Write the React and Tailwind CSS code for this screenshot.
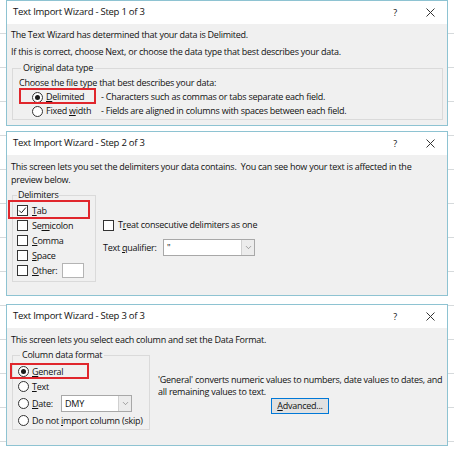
import { ChevronDown } from 'lucide-react'

const FONT = "font-['Open_Sans',sans-serif] text-[9px] tracking-[-0.25px] text-[#111]"

function Radio({ checked }) {
  return (
    <span className="flex h-[11px] w-[11px] shrink-0 items-center justify-center rounded-full border border-[#333] bg-white">
      {checked && <span className="h-[5px] w-[5px] rounded-full bg-[#1a1a1a]" />}
    </span>
  )
}

function Check({ checked }) {
  return (
    <span className="flex h-[11px] w-[11px] shrink-0 items-center justify-center border border-[#333] bg-white">
      {checked && (
        <svg width="9" height="9" viewBox="0 0 9 9">
          <path d="M1.2 4.6 L3.4 6.8 L7.8 1.6" fill="none" stroke="#222" strokeWidth="1" />
        </svg>
      )}
    </span>
  )
}

// red annotation box drawn over the screenshot
function Mark({ className }) {
  return <span className={`pointer-events-none absolute border-2 border-[#e0262c] ${className}`} />
}

function Combo({ value, className }) {
  return (
    <div className={`flex h-[17px] border border-[#a8a8a8] bg-white ${className}`}>
      <span className="flex-1 pl-[3px] leading-[15px]">{value}</span>
      <span className="flex w-[13px] items-center justify-center border-l border-[#d0d0d0] bg-[#ececec]">
        <ChevronDown size={9} strokeWidth={1.5} className="text-[#666]" />
      </span>
    </div>
  )
}

function Dialog({ title, className, children }) {
  return (
    <div className={`flex flex-col border border-[#8ec3d2] ${className}`}>
      <div className="flex h-[23px] shrink-0 items-center bg-white pl-[6px]">
        <span className="flex-1 text-[9.5px]">{title}</span>
        <span className="mr-[28px] w-[6px] text-center">?</span>
        <svg width="9" height="9" viewBox="0 0 9 9" className="mr-[12px]">
          <path d="M0.5 0.5 L8.5 8.5 M8.5 0.5 L0.5 8.5" stroke="#333" strokeWidth="1" />
        </svg>
      </div>
      <div className="flex-1 bg-[#f0f0f0] px-[4px] pt-[5px]">{children}</div>
    </div>
  )
}

function Strip() {
  return (
    <div className="w-[6px] shrink-0 bg-[repeating-linear-gradient(to_bottom,#ffffff_0,#ffffff_33px,#d6dadc_33px,#d6dadc_34px)]" />
  )
}

export default function App() {
  return (
    <div className={`flex h-[450px] w-[454px] overflow-hidden bg-white ${FONT}`}>
      <Strip />
      <div className="flex w-[442px] flex-col">
        {/* Step 1 */}
        <Dialog title="Text Import Wizard - Step 1 of 3" className="h-[126px]">
          <p className="h-[12px] leading-[12px]">The Text Wizard has determined that your data is Delimited.</p>
          <p className="mt-[5px] h-[12px] leading-[12px]">If this is correct, choose Next, or choose the data type that best describes your data.</p>
          <fieldset className="ml-[1px] mt-[4px] border border-[#dadada] pb-[1px] pl-[6px] pt-[2px]">
            <legend className="ml-[2px] px-[2px] leading-[12px]">Original data type</legend>
            <div className="flex h-[14px] items-center">Choose the file type that best describes your data:</div>
            <div className="relative flex h-[14px] items-center pl-[13px]">
              <Mark className="-top-[2px] left-0 h-[16px] w-[77px]" />
              <Radio checked />
              <span className="ml-[3px] w-[55px]"><u>D</u>elimited</span>
              <span>- Characters such as commas or tabs separate each field.</span>
            </div>
            <div className="flex h-[14px] items-center pl-[13px]">
              <Radio />
              <span className="ml-[3px] w-[55px]">Fixed <u>w</u>idth</span>
              <span>- Fields are aligned in columns with spaces between each field.</span>
            </div>
          </fieldset>
        </Dialog>

        {/* Step 2 */}
        <Dialog title="Text Import Wizard - Step 2 of 3" className="mt-[5px] h-[165px]">
          <p className="leading-[13px]">
            This screen lets you set the delimiters your data contains.&nbsp; You can see how your text is affected in the
            <br />
            preview below.
          </p>
          <div className="mt-[3px] flex">
            <fieldset className="ml-[1px] w-[84px] border border-[#dadada] pb-[3px] pl-[4px] pt-[2px]">
              <legend className="px-[1px] leading-[12px]">Delimiters</legend>
              <div className="relative flex h-[15px] items-center">
                <Mark className="-left-[9px] -top-[3px] h-[19px] w-[82px]" />
                <Check checked />
                <span className="ml-[4px]"><u>T</u>ab</span>
              </div>
              <div className="flex h-[15px] items-center">
                <Check />
                <span className="ml-[4px]">Se<u>m</u>icolon</span>
              </div>
              <div className="flex h-[15px] items-center">
                <Check />
                <span className="ml-[4px]"><u>C</u>omma</span>
              </div>
              <div className="flex h-[15px] items-center">
                <Check />
                <span className="ml-[4px]"><u>S</u>pace</span>
              </div>
              <div className="flex h-[15px] items-center">
                <Check />
                <span className="ml-[4px] w-[30px]"><u>O</u>ther:</span>
                <span className="h-[15px] w-[22px] border border-[#b4b4b4] bg-white" />
              </div>
            </fieldset>
            <div className="ml-[7px] flex flex-col">
              <div className="mt-[29px] flex h-[14px] items-center">
                <Check />
                <span className="ml-[4px]">T<u>r</u>eat consecutive delimiters as one</span>
              </div>
              <div className="mt-[7px] flex h-[17px] items-center">
                <span className="w-[60px]">Text <u>q</u>ualifier:</span>
                <Combo value={'"'} className="w-[92px]" />
              </div>
            </div>
          </div>
        </Dialog>

        {/* Step 3 */}
        <Dialog title="Text Import Wizard - Step 3 of 3" className="mt-[8px] h-[142px]">
          <p className="leading-[13px]">This screen lets you select each column and set the Data Format.</p>
          <div className="mt-[3px] flex">
            <fieldset className="ml-[1px] w-[138px] shrink-0 border border-[#dadada] pb-[1px] pl-[5px] pt-[3px]">
              <legend className="ml-[2px] px-[2px] leading-[12px]">Column data format</legend>
              <div className="relative flex h-[15px] items-center">
                <Mark className="-left-[8px] -top-[1px] h-[16px] w-[79px]" />
                <Radio checked />
                <span className="ml-[3px]"><u>G</u>eneral</span>
              </div>
              <div className="flex h-[15px] items-center">
                <Radio />
                <span className="ml-[3px]"><u>T</u>ext</span>
              </div>
              <div className="mt-[1px] flex h-[17px] items-center">
                <Radio />
                <span className="ml-[3px] w-[29px]"><u>D</u>ate:</span>
                <Combo value="DMY" className="w-[71px]" />
              </div>
              <div className="mt-[1px] flex h-[15px] items-center">
                <Radio />
                <span className="ml-[3px]">Do not <u>i</u>mport column (skip)</span>
              </div>
            </fieldset>
            <div className="ml-[8px] flex flex-col">
              <p className="mt-[25px] whitespace-nowrap leading-[12px]">
                'General' converts numeric values to numbers, date values to dates, and
                <br />
                all remaining values to text.
              </p>
              <button className="ml-[113px] flex h-[16px] w-[58px] items-center justify-center border border-[#0078d7] bg-[#e1e1e1] leading-[14px]">
                <span><u>A</u>dvanced...</span>
              </button>
            </div>
          </div>
        </Dialog>
      </div>
      <Strip />
    </div>
  )
}
